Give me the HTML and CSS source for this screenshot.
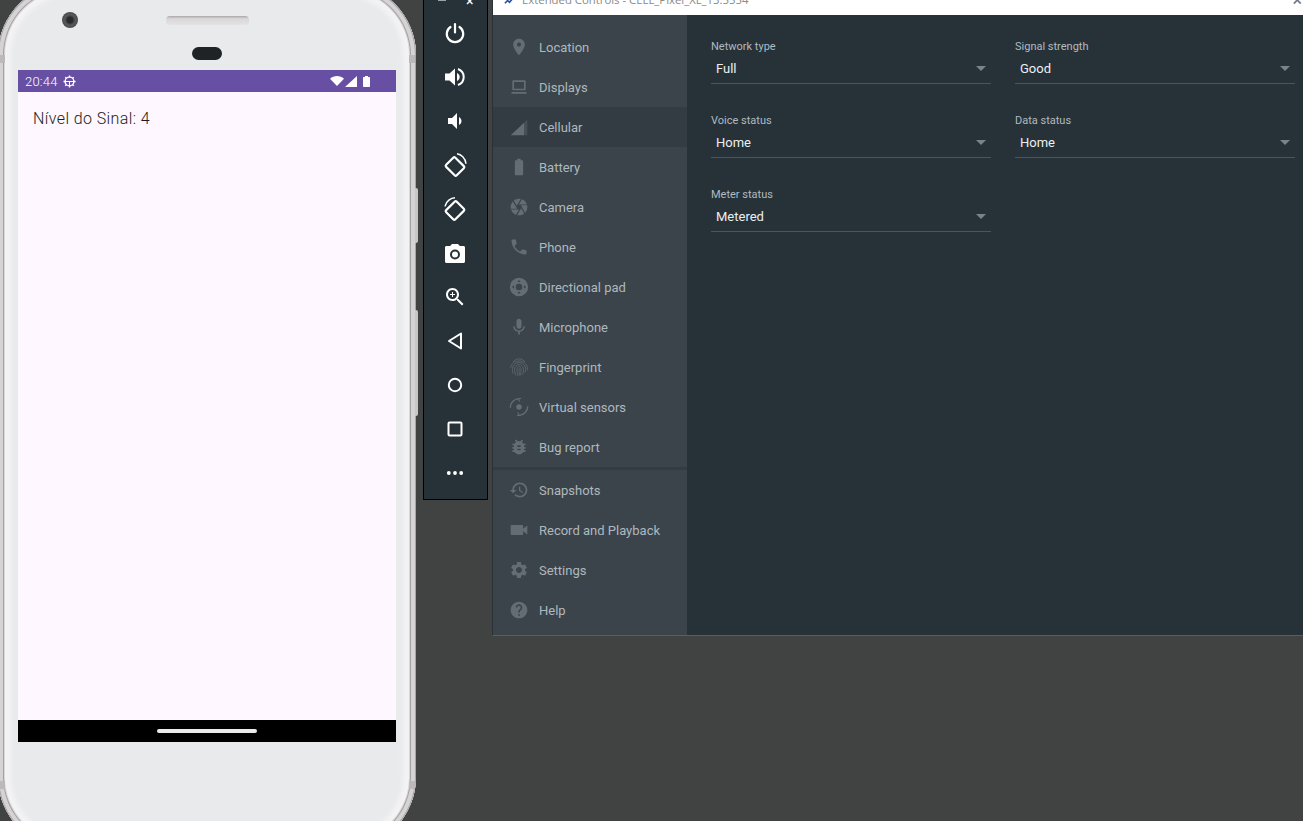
FILE: index.html
```html
<!DOCTYPE html>
<html lang="en">
<head>
	<meta charset="UTF-8">
	<title>Extended Controls - Cellular</title>
	<link rel="stylesheet" href="styles.css">
</head>
<body>
	<div class="desktop">

		<!-- emulator phone -->
		<div class="phone">
			<span class="side-key side-key-power"></span>
			<span class="side-key side-key-volume"></span>
			<span class="seam seam-tl"></span>
			<span class="seam seam-tr"></span>
			<span class="seam seam-bl"></span>
			<span class="seam seam-br"></span>
			<div class="phone-top">
				<span class="lens"></span>
				<span class="speaker"></span>
				<span class="sensor"></span>
			</div>
			<div class="screen">
				<div class="status-bar">
					<span class="clock">20:44</span>
					<svg class="status-gear" viewBox="0 0 14 14"><circle cx="7" cy="7" r="4.7" fill="none" stroke="#fff" stroke-width="1.5"/><path d="M2 7h10M7 7v5" stroke="#fff" stroke-width="1.2"/><path d="M7 .5v2M7 11.500v2M.5 7h2M11.500 7h2M2.400 2.400l1.400 1.400M10.200 10.200l1.400 1.400M11.600 2.400l-1.400 1.400M3.800 10.200l-1.400 1.400" stroke="#fff" stroke-width="1.500"/></svg>
					<span class="status-right">
						<svg class="status-wifi" viewBox="0 0 14 10"><path d="M0 2.800C3.800-.9 10.200-.9 14 2.800L7 10z" fill="#fff"/></svg>
						<svg class="status-signal" viewBox="0 0 12 11"><path d="M0 11L12 0v11z" fill="#fff"/></svg>
						<svg class="status-battery" viewBox="0 0 7 11"><path d="M2 0h3v1h1.300c.4 0 .7.300.7.700v8.600c0 .4-.3.700-.7.700H.7c-.4 0-.7-.3-.7-.7V1.700C0 1.300.3 1 .7 1H2z" fill="#fff"/></svg>
					</span>
				</div>
				<div class="app-content">
					<p class="signal-level">Nível do Sinal: 4</p>
				</div>
				<div class="nav-bar"><span class="home-pill"></span></div>
			</div>
		</div>

		<!-- emulator toolbar -->
		<div class="toolbar">
			<div class="toolbar-top"><span class="tb-min"></span><span class="tb-close">×</span></div>
			<div class="tool"><svg viewBox="0 0 24 24"><path d="M12 3v8.500" fill="none" stroke="#fff" stroke-width="2.200" stroke-linecap="round"/><path d="M7.500 6a8.200 8.200 0 1 0 9 0" fill="none" stroke="#fff" stroke-width="2.200" stroke-linecap="round"/></svg></div>
			<div class="tool"><svg viewBox="0 0 24 24"><path fill="#fff" d="M2 8.500v7h4.500l5.500 5V3.500L6.500 8.500H2zM14 8c1.800.8 2.700 2.300 2.700 4s-.9 3.200-2.700 4z"/><path fill="none" stroke="#fff" stroke-width="2" d="M15 4c3.300 1.200 5.700 4.300 5.700 8s-2.400 6.800-5.700 8"/></svg></div>
			<div class="tool"><svg viewBox="0 0 24 24"><path fill="#fff" d="M18.500 12c0-1.770-1.020-3.290-2.500-4.030v8.050c1.480-.73 2.500-2.250 2.500-4.020zM5 9v6h4l5 5V4L9 9H5z"/></svg></div>
			<div class="tool"><svg viewBox="0 0 24 24"><rect x="5.500" y="6" width="13" height="15" rx="1.500" transform="rotate(-45 12 13.500)" fill="none" stroke="#fff" stroke-width="2.200"/><path d="M14 .8c4 .6 8.400 4 9 10" fill="none" stroke="#fff" stroke-width="1.500"/></svg></div>
			<div class="tool"><svg viewBox="0 0 24 24"><rect x="5.500" y="6" width="13" height="15" rx="1.500" transform="rotate(45 12 13.500)" fill="none" stroke="#fff" stroke-width="2.200"/><path d="M12 .8c-4 .2-9 3-10 8.500" fill="none" stroke="#fff" stroke-width="1.500"/></svg></div>
			<div class="tool"><svg viewBox="0 0 24 24"><path fill="#fff" d="M9 3L7.200 5H3.500C2.700 5 2 5.700 2 6.500v14c0 .8.700 1.500 1.500 1.500h17c.8 0 1.500-.7 1.500-1.500v-14c0-.8-.7-1.500-1.500-1.500h-3.700L15 3H9z"/><circle cx="12" cy="13.500" r="4" fill="none" stroke="#263238" stroke-width="2"/></svg></div>
			<div class="tool"><svg viewBox="0 0 24 24"><path fill="#fff" d="M15.500 14h-.79l-.28-.27C15.410 12.590 16 11.110 16 9.500 16 5.910 13.090 3 9.500 3S3 5.910 3 9.500 5.910 16 9.500 16c1.610 0 3.090-.59 4.230-1.570l.27.28v.79l5 4.990L20.490 19l-4.990-5zm-6 0C7.010 14 5 11.990 5 9.500S7.010 5 9.500 5 14 7.010 14 9.500 11.990 14 9.500 14zm2.500-4h-2v2H9v-2H7V9h2V7h1v2h2v1z"/></svg></div>
			<div class="tool"><svg viewBox="0 0 24 24"><path d="M18 4.500v15L6 12z" fill="none" stroke="#fff" stroke-width="2" stroke-linejoin="round"/></svg></div>
			<div class="tool"><svg viewBox="0 0 24 24"><circle cx="12" cy="12" r="6.200" fill="none" stroke="#fff" stroke-width="2"/></svg></div>
			<div class="tool"><svg viewBox="0 0 24 24"><rect x="5.500" y="5.500" width="13" height="13" rx="1" fill="none" stroke="#fff" stroke-width="2"/></svg></div>
			<div class="tool"><svg viewBox="0 0 24 24"><circle cx="5.800" cy="12" r="1.900" fill="#fff"/><circle cx="12" cy="12" r="1.900" fill="#fff"/><circle cx="18.200" cy="12" r="1.900" fill="#fff"/></svg></div>
		</div>

		<!-- extended controls window -->
		<div class="window">
			<div class="title-bar">
				<svg class="title-icon" viewBox="0 0 12 12"><path d="M1 9l3-3 2 2 5-6" fill="none" stroke="#2c4f9e" stroke-width="1.800"/></svg>
				<span class="title-text">Extended Controls - CELL_Pixel_XL_13:5554</span>
				<span class="title-close">×</span>
			</div>
			<div class="window-body">
				<div class="sidebar">
					<div class="nav-item"><svg viewBox="0 0 24 24"><path d="M12 2C8.130 2 5 5.130 5 9c0 5.250 7 13 7 13s7-7.750 7-13c0-3.870-3.130-7-7-7zm0 9.500c-1.380 0-2.500-1.120-2.500-2.500s1.120-2.500 2.500-2.500 2.500 1.120 2.500 2.500-1.120 2.500-2.500 2.500z"/></svg>Location</div>
					<div class="nav-item"><svg viewBox="0 0 24 24"><path fill-rule="evenodd" d="M5 4h14c.6 0 1 .4 1 1v10c0 .6-.4 1-1 1H5c-.6 0-1-.4-1-1V5c0-.6.400-1 1-1zm1 2v8h12V6zM3 18h18v2H3z"/></svg>Displays</div>
					<div class="nav-item active"><svg viewBox="0 0 24 24"><path d="M2 22L18 7v15z"/><path d="M18 7l4-4v19h-4z" opacity=".4"/></svg>Cellular</div>
					<div class="nav-item"><svg viewBox="0 0 24 24"><path d="M15.670 4H14V2h-4v2H8.330C7.600 4 7 4.600 7 5.330v15.330C7 21.400 7.600 22 8.330 22h7.330c.74 0 1.340-.6 1.340-1.330V5.330C17 4.600 16.400 4 15.670 4z"/></svg>Battery</div>
					<div class="nav-item"><svg viewBox="0 0 24 24"><path d="M9.400 10.500l4.770-8.260C13.470 2.090 12.750 2 12 2c-2.400 0-4.600.85-6.320 2.250l3.660 6.350.06-.1zM21.540 9c-.92-2.920-3.150-5.260-6-6.340L11.880 9h9.660zm.26 1h-7.490l.29.5 4.760 8.250C21 16.970 22 14.610 22 12c0-.69-.07-1.350-.2-2zM8.540 12l-3.900-6.750C3.010 7.030 2 9.390 2 12c0 .69.07 1.350.2 2h7.490l-1.150-2zm-6.080 3c.92 2.920 3.150 5.260 6 6.340L12.120 15H2.460zm11.270 0l-3.900 6.760c.7.150 1.420.24 2.170.24 2.400 0 4.600-.85 6.320-2.250l-3.660-6.350-.93 1.600z"/></svg>Camera</div>
					<div class="nav-item"><svg viewBox="0 0 24 24"><path d="M6.620 10.790c1.440 2.830 3.760 5.140 6.590 6.590l2.200-2.200c.27-.27.67-.36 1.020-.24 1.120.37 2.330.57 3.570.57.55 0 1 .45 1 1V20c0 .55-.45 1-1 1-9.390 0-17-7.610-17-17 0-.55.45-1 1-1h3.500c.55 0 1 .45 1 1 0 1.250.2 2.450.57 3.570.11.35.03.74-.25 1.020l-2.200 2.200z"/></svg>Phone</div>
					<div class="nav-item"><svg viewBox="0 0 24 24"><path fill-rule="evenodd" d="M12 1a11 11 0 1 1 0 22 11 11 0 0 1 0-22zm0 7a4 4 0 1 0 0 8 4 4 0 0 0 0-8zM12 3.500l-2 2.500h4zM12 20.500l-2-2.500h4zM3.500 12l2.500 2v-4zM20.500 12l-2.500 2v-4z"/></svg>Directional pad</div>
					<div class="nav-item"><svg viewBox="0 0 24 24"><path d="M12 14c1.660 0 2.990-1.340 2.990-3L15 5c0-1.660-1.340-3-3-3S9 3.340 9 5v6c0 1.660 1.340 3 3 3zm5.300-3c0 3-2.540 5.100-5.300 5.100S6.700 14 6.700 11H5c0 3.410 2.720 6.230 6 6.720V21h2v-3.280c3.280-.48 6-3.300 6-6.720h-1.700z"/></svg>Microphone</div>
					<div class="nav-item"><svg viewBox="0 0 24 24" class="line-icon"><path d="M5 6c3-5 11-5 14 0"/><path d="M2 13c1-11 19-11 20 0v3"/><path d="M5 20c-1.500-3-1-6-.5-8 1.800-7 13.200-7 15 0 .5 2 .5 4 0 6.500"/><path d="M8 22c-1.200-3-1.500-6-1-9 1-5 9-5 10 0 .5 2.500.5 5-.5 8"/><path d="M11 23c-1.200-3-1.700-6-1.200-9.500.5-2.500 4-2.500 4.500 0 .5 3 0 6-.8 8.500"/><path d="M12 13.500c0 3 .2 6 .8 8.500"/></svg>Fingerprint</div>
					<div class="nav-item"><svg viewBox="0 0 24 24" class="line-icon thick"><path d="M1.500 13C1.500 7 6 2.500 11.500 2"/><path d="M22.500 11c0 6-4.500 10.500-10 11"/><path d="M14.500 1.500L11 2.300 13 5.500" stroke-width="1.300"/><path d="M9.500 22.500l3-.5-2-3.500" stroke-width="1.300"/><circle cx="12" cy="12" r="3.300" class="dot"/></svg>Virtual sensors</div>
					<div class="nav-item"><svg viewBox="0 0 24 24"><path d="M20 8h-2.810c-.45-.78-1.070-1.450-1.820-1.960L17 4.410 15.590 3l-2.170 2.170C12.960 5.060 12.490 5 12 5c-.49 0-.96.06-1.410.17L8.410 3 7 4.410l1.620 1.630C7.880 6.550 7.260 7.220 6.810 8H4v2h2.090c-.05.33-.09.66-.09 1v1H4v2h2v1c0 .34.04.67.09 1H4v2h2.810c1.040 1.790 2.970 3 5.190 3s4.150-1.210 5.190-3H20v-2h-2.090c.05-.33.09-.66.09-1v-1h2v-2h-2v-1c0-.34-.04-.67-.09-1H20V8zm-6 8h-4v-2h4v2zm0-4h-4v-2h4v2z"/></svg>Bug report</div>
					<div class="nav-divider"></div>
					<div class="nav-item"><svg viewBox="0 0 24 24"><path d="M13 3c-4.970 0-9 4.030-9 9H1l3.890 3.890.07.14L9 12H6c0-3.870 3.130-7 7-7s7 3.130 7 7-3.130 7-7 7c-1.930 0-3.680-.79-4.940-2.060l-1.420 1.420C8.270 19.990 10.510 21 13 21c4.970 0 9-4.030 9-9s-4.030-9-9-9zm-1 5v5l4.280 2.540.72-1.210-3.500-2.080V8H12z"/></svg>Snapshots</div>
					<div class="nav-item"><svg viewBox="0 0 24 24"><path d="M17 10.500V7c0-.55-.45-1-1-1H3c-.55 0-1 .45-1 1v10c0 .55.45 1 1 1h13c.55 0 1-.45 1-1v-3.500l5 4v-11l-5 4z"/></svg>Record and Playback</div>
					<div class="nav-item"><svg viewBox="0 0 24 24"><path d="M19.140 12.940c.04-.3.06-.61.06-.94 0-.32-.02-.64-.07-.94l2.030-1.580c.18-.14.23-.41.12-.61l-1.920-3.320c-.12-.22-.37-.29-.59-.22l-2.390.96c-.5-.38-1.030-.7-1.620-.94l-.36-2.540c-.04-.24-.24-.41-.48-.41h-3.840c-.24 0-.43.17-.47.41l-.36 2.540c-.59.24-1.130.57-1.620.94l-2.390-.96c-.22-.08-.47 0-.59.22L2.740 8.870c-.12.21-.08.47.12.61l2.030 1.580c-.05.3-.09.63-.09.94s.02.64.07.94l-2.030 1.580c-.18.14-.23.41-.12.61l1.920 3.320c.12.22.37.29.59.22l2.390-.96c.5.38 1.030.7 1.620.94l.36 2.540c.05.24.24.41.48.41h3.840c.24 0 .44-.17.47-.41l.36-2.540c.59-.24 1.130-.56 1.620-.94l2.390.96c.22.08.47 0 .59-.22l1.920-3.320c.12-.22.07-.47-.12-.61l-2.010-1.580zM12 15.600c-1.980 0-3.600-1.620-3.600-3.600s1.620-3.600 3.600-3.600 3.600 1.620 3.600 3.600-1.620 3.600-3.600 3.600z"/></svg>Settings</div>
					<div class="nav-item"><svg viewBox="0 0 24 24"><path d="M12 2C6.480 2 2 6.480 2 12s4.480 10 10 10 10-4.480 10-10S17.520 2 12 2zm1 17h-2v-2h2v2zm2.070-7.750l-.9.920C13.450 12.900 13 13.500 13 15h-2v-.5c0-1.100.45-2.100 1.170-2.830l1.240-1.260c.37-.36.59-.86.59-1.410 0-1.100-.9-2-2-2s-2 .9-2 2H8c0-2.210 1.790-4 4-4s4 1.790 4 4c0 .88-.36 1.680-.93 2.250z"/></svg>Help</div>
				</div>
				<div class="main-panel">
					<div class="form-grid">
						<div class="field">
							<div class="field-label">Network type</div>
							<div class="field-value">Full<span class="arrow"></span></div>
						</div>
						<div class="field">
							<div class="field-label">Signal strength</div>
							<div class="field-value">Good<span class="arrow"></span></div>
						</div>
						<div class="field">
							<div class="field-label">Voice status</div>
							<div class="field-value">Home<span class="arrow"></span></div>
						</div>
						<div class="field">
							<div class="field-label">Data status</div>
							<div class="field-value">Home<span class="arrow"></span></div>
						</div>
						<div class="field">
							<div class="field-label">Meter status</div>
							<div class="field-value">Metered<span class="arrow"></span></div>
						</div>
					</div>
				</div>
			</div>
		</div>

	</div>
</body>
</html>
```

FILE: styles.css
```css
html, body {
	margin: 0;
	padding: 0;
	height: 100%;
}
body {
	background-color: #414342;
	font-family: Roboto, sans-serif;
	overflow: hidden;
}
.desktop {
	position: relative;
	width: 1303px;
	height: 821px;
	overflow: hidden;
}

/* phone */
.phone {
	position: absolute;
	left: -2px;
	top: -17px;
	width: 418px;
	height: 866px;
	border-radius: 72px;
	background-color: #e9eaec;
	box-shadow:
		inset 0 0 0 1px #a9a5a6,
		inset 0 0 0 5px #d5d3d4,
		inset 0 0 0 6px #a5a1a2,
		inset 0 0 0 7px #d9d8d9,
		inset 0 0 4px 13px #f3f3f5;
}
.side-key {
	position: absolute;
	left: 417px;
	width: 3px;
	background-color: #c8c6c6;
	border-radius: 0 2px 2px 0;
}
.side-key-power {
	top: 205px;
	height: 55px;
}
.side-key-volume {
	top: 327px;
	height: 106px;
}
.seam {
	position: absolute;
	width: 6px;
	height: 8px;
	background-color: #bdb9ba;
}
.seam-tl {
	left: 1px;
	top: 72px;
}
.seam-tr {
	right: 1px;
	top: 72px;
}
.seam-bl {
	left: 1px;
	top: 798px;
}
.seam-br {
	right: 1px;
	top: 798px;
}
.phone-top {
	position: relative;
	height: 87px;
}
.lens {
	position: absolute;
	left: 64px;
	top: 29px;
	width: 16px;
	height: 16px;
	border-radius: 50%;
	background: radial-gradient(circle, #2a2a2c 0, #2a2a2c 25%, #55595c 45%, #3b3e41 100%);
}
.speaker {
	position: absolute;
	left: 168px;
	top: 33px;
	width: 83px;
	height: 9px;
	border-radius: 4px;
	background: linear-gradient(#aaa7a8 0, #d9d7d8 30%, #e4e2e3 100%);
}
.sensor {
	position: absolute;
	left: 194px;
	top: 64px;
	width: 30px;
	height: 13px;
	border-radius: 7px;
	background-color: #1f2326;
}
.screen {
	display: flex;
	flex-direction: column;
	width: 378px;
	height: 672px;
	margin-left: 20px;
	background-color: #fef7ff;
}
.status-bar {
	display: flex;
	align-items: center;
	height: 22px;
	padding: 0 26px 0 7px;
	background-color: #6750a4;
	color: #fff;
	font-size: 13px;
}
.clock {
	font-weight: 300;
	letter-spacing: .2px;
}
.status-gear {
	width: 13px;
	height: 13px;
	margin-left: 5px;
}
.status-right {
	display: flex;
	align-items: center;
	margin-left: auto;
}
.status-wifi {
	width: 14px;
	height: 10px;
}
.status-signal {
	width: 12px;
	height: 11px;
	margin-left: 1px;
}
.status-battery {
	width: 7px;
	height: 11px;
	margin-left: 6px;
}
.app-content {
	flex: 1;
	padding: 17px 15px;
}
.signal-level {
	margin: 0;
	font-size: 16px;
	font-weight: 300;
	letter-spacing: .4px;
	line-height: 20px;
	color: #1d1b20;
}
.nav-bar {
	display: flex;
	align-items: center;
	justify-content: center;
	height: 22px;
	background-color: #000;
}
.home-pill {
	width: 100px;
	height: 4px;
	border-radius: 2px;
	background-color: #ececec;
}

/* toolbar */
.toolbar {
	position: absolute;
	left: 423px;
	top: -1px;
	width: 63px;
	height: 499px;
	border: 1px solid #000;
	background-color: #263238;
}
.toolbar-top {
	position: relative;
	height: 11px;
	overflow: hidden;
}
.tb-min {
	position: absolute;
	left: 14px;
	top: 0;
	width: 8px;
	height: 1px;
	background-color: #9aa3a8;
}
.tb-close {
	position: absolute;
	left: 42px;
	top: -6px;
	color: #fff;
	font-size: 14px;
	line-height: 14px;
}
.tool {
	display: flex;
	align-items: center;
	justify-content: center;
	height: 44px;
	padding-right: 1px;
}
.tool svg {
	width: 24px;
	height: 24px;
	overflow: visible;
}

/* extended controls */
.window {
	position: absolute;
	left: 492px;
	top: 0;
	width: 811px;
	height: 635px;
	border-left: 1px solid #2b3136;
	border-bottom: 1px solid #5a5e60;
	display: flex;
	flex-direction: column;
}
.title-bar {
	display: flex;
	height: 15px;
	background-color: #fff;
	overflow: hidden;
}
.title-icon {
	width: 11px;
	height: 11px;
	margin: -5px 0 0 11px;
}
.title-text {
	height: 14px;
	margin: -7px 0 0 7px;
	font-family: "Open Sans", sans-serif;
	font-size: 11.350px;
	line-height: 14px;
	color: #8a8a8a;
}
.title-close {
	margin: -7px 2px 0 auto;
	font-size: 18px;
	line-height: 14px;
	color: #777;
}
.window-body {
	flex: 1;
	display: flex;
	min-height: 0;
}
.sidebar {
	width: 194px;
	padding-top: 12px;
	background-color: #3b444a;
}
.nav-item {
	display: flex;
	align-items: center;
	gap: 10px;
	height: 40px;
	padding-left: 16px;
	font-size: 13px;
	color: #afb8be;
}
.nav-item svg {
	width: 20px;
	height: 20px;
	fill: #646d73;
}
.nav-item.active {
	background-color: #333c42;
}
.nav-item .line-icon {
	fill: none;
	stroke: #646d73;
	stroke-width: .9;
}
.nav-item .line-icon.thick {
	stroke-width: 1.600;
}
.nav-item .dot {
	fill: #646d73;
	stroke: none;
}
.nav-divider {
	height: 3px;
	background-color: #333c42;
}
.main-panel {
	flex: 1;
	background-color: #273238;
	padding: 24px 0 0 24px;
}
.form-grid {
	display: grid;
	grid-template-columns: 280px 280px;
	column-gap: 24px;
	row-gap: 29px;
}
.field-label {
	height: 13px;
	padding-top: 1px;
	font-size: 11px;
	line-height: 14px;
	color: #b0bac0;
}
.field-value {
	display: flex;
	align-items: center;
	justify-content: space-between;
	height: 30px;
	padding: 0 5px;
	border-bottom: 1px solid #4a565c;
	font-size: 13px;
	color: #eceff1;
}
.arrow {
	width: 0;
	height: 0;
	border-left: 5.500px solid transparent;
	border-right: 5.500px solid transparent;
	border-top: 5px solid #78838a;
}
```
